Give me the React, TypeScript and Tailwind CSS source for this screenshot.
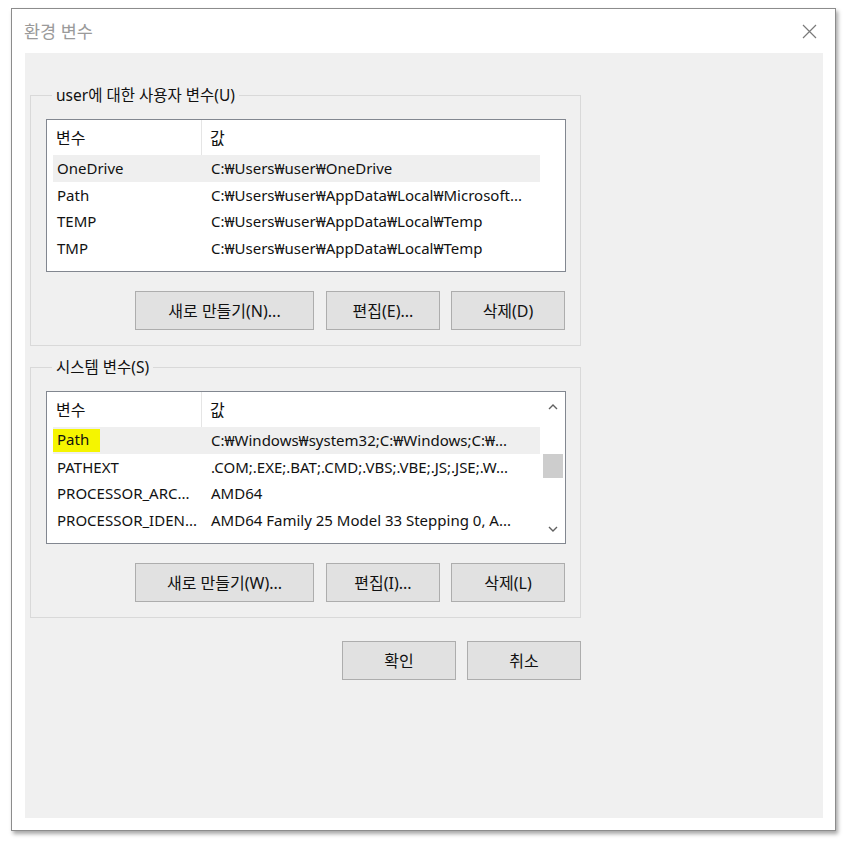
import React from "react";

type Row = { name: string; value: string; selected?: boolean; marked?: boolean };

const userVars: Row[] = [
  { name: "OneDrive", value: "C:₩Users₩user₩OneDrive", selected: true },
  { name: "Path", value: "C:₩Users₩user₩AppData₩Local₩Microsoft..." },
  { name: "TEMP", value: "C:₩Users₩user₩AppData₩Local₩Temp" },
  { name: "TMP", value: "C:₩Users₩user₩AppData₩Local₩Temp" },
];

const systemVars: Row[] = [
  { name: "Path", value: "C:₩Windows₩system32;C:₩Windows;C:₩...", selected: true, marked: true },
  { name: "PATHEXT", value: ".COM;.EXE;.BAT;.CMD;.VBS;.VBE;.JS;.JSE;.W..." },
  { name: "PROCESSOR_ARC...", value: "AMD64" },
  { name: "PROCESSOR_IDEN...", value: "AMD64 Family 25 Model 33 Stepping 0, A..." },
];

const Chevron = ({ down }: { down?: boolean }) => (
  <svg width="10" height="6" viewBox="0 0 10 6" className="block">
    <path
      d={down ? "M1 1 L5 5 L9 1" : "M1 5 L5 1 L9 5"}
      fill="none"
      stroke="#606060"
      strokeWidth="1.4"
    />
  </svg>
);

const VarList = ({ rows, scroll }: { rows: Row[]; scroll?: boolean }) => (
  <div className="h-[153px] border border-[#828790] bg-white flex">
    <div className="w-[493px] flex flex-col">
      <div className="h-[35px] flex items-center shrink-0 text-[16px]">
        <div className="w-[155px] h-full flex items-center pl-[9px] border-r border-[#e5e5e5]">변수</div>
        <div className="pl-[8px]">값</div>
      </div>
      {rows.map((r) => (
        <div
          key={r.name}
          className={
            "ml-[6px] h-[26.7px] flex items-center shrink-0 whitespace-nowrap " +
            (r.selected ? "bg-[#efefef]" : "")
          }
        >
          <div className="w-[149px]">
            {r.marked ? (
              <span className="bg-[#f5f500] pl-[4px] pr-[11px] pt-[0px] pb-[3px] relative top-[-1px]">{r.name}</span>
            ) : (
              <span className="pl-[4px]">{r.name}</span>
            )}
          </div>
          <div className="pl-[9px]">{r.value}</div>
        </div>
      ))}
    </div>
    {scroll && (
      <div className="flex-1 flex flex-col items-center pt-[12px] pb-[11px]">
        <Chevron />
        <div className="mt-[44px] w-[20px] h-[24px] bg-[#cdcdcd]" />
        <div className="flex-1" />
        <Chevron down />
      </div>
    )}
  </div>
);

const Btn = ({ label, w }: { label: string; w: string }) => (
  <button className={"h-[39px] border border-[#adadad] bg-[#e1e1e1] text-[16px] " + w}>{label}</button>
);

const Group = ({
  title,
  rows,
  scroll,
  buttons,
  className,
}: {
  title: string;
  rows: Row[];
  scroll?: boolean;
  buttons: string[];
  className?: string;
}) => (
  <fieldset className={"w-[551px] border border-[#d9d9d9] pl-[15px] pr-[14px] pt-[14px] pb-[15px] " + (className ?? "")}>
    <legend className="ml-[6px] px-[4px] h-[20px] leading-[20px] text-[15.5px]">{title}</legend>
    <VarList rows={rows} scroll={scroll} />
    <div className="mt-[19px] mr-[1px] flex justify-end gap-[11px]">
      <Btn label={buttons[0]} w="w-[179px] mr-[1px]" />
      <Btn label={buttons[1]} w="w-[114px]" />
      <Btn label={buttons[2]} w="w-[114px]" />
    </div>
  </fieldset>
);

const App: React.FC = () => {
  return (
    <div
      className="min-h-screen bg-white pt-[8px] pl-[11px] text-[15px] text-[#111]"
      style={{ fontFamily: '"Noto Sans", "Noto Sans CJK KR", sans-serif' }}
    >
      <div className="w-[825px] h-[823px] border border-[#8c8c8c] bg-white shadow-[2px_3px_4px_rgba(0,0,0,0.35)] flex flex-col">
        <div className="h-[44px] shrink-0 flex items-center justify-between pl-[12px] pr-[18px]">
          <span className="text-[17.5px] text-[#9a9a9a]">환경 변수</span>
          <svg width="15" height="15" viewBox="0 0 15 15">
            <path d="M1 1 L14 14 M14 1 L1 14" stroke="#7a7a7a" strokeWidth="1.2" />
          </svg>
        </div>
        <div className="flex-1 ml-[13px] mr-[12px] mb-[12px] bg-[#f0f0f0] pl-[5px] pt-[32px]">
          <Group
            title="user에 대한 사용자 변수(U)"
            rows={userVars}
            buttons={["새로 만들기(N)...", "편집(E)...", "삭제(D)"]}
          />
          <Group
            title="시스템 변수(S)"
            rows={systemVars}
            scroll
            className="mt-[11px]"
            buttons={["새로 만들기(W)...", "편집(I)...", "삭제(L)"]}
          />
          <div className="w-[551px] mt-[23px] flex justify-end gap-[11px]">
            <Btn label="확인" w="w-[114px]" />
            <Btn label="취소" w="w-[114px]" />
          </div>
        </div>
      </div>
    </div>
  );
};

export default App;
